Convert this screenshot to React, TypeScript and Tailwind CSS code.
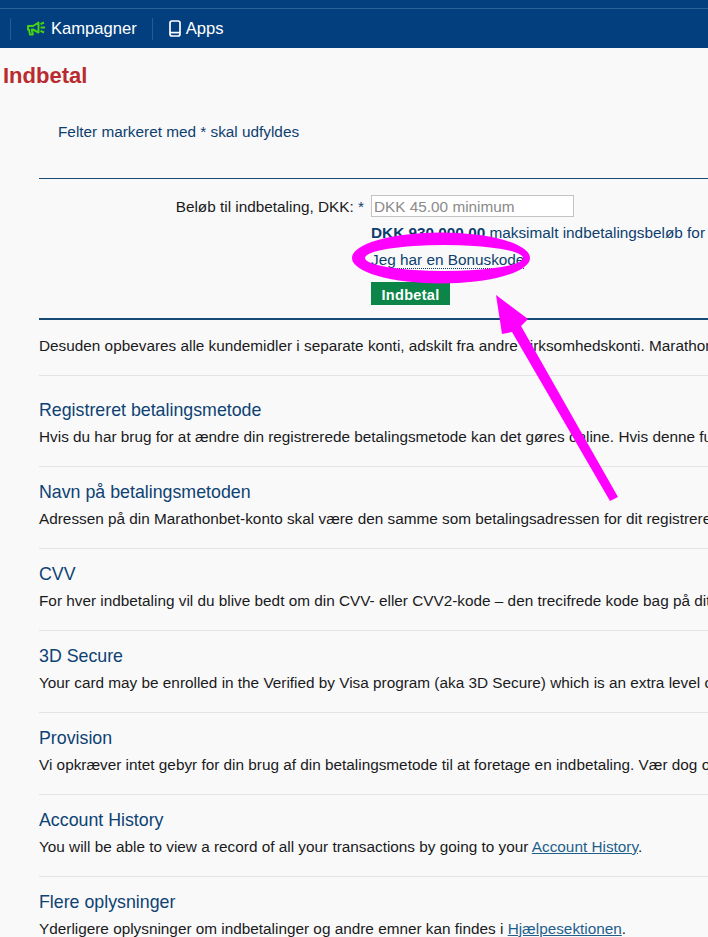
type Section = {
  title: string;
  text: string;
  link?: string;
};

const SECTIONS: Section[] = [
  {
    title: "Registreret betalingsmetode",
    text: "Hvis du har brug for at ændre din registrerede betalingsmetode kan det gøres online. Hvis denne funktion",
  },
  {
    title: "Navn på betalingsmetoden",
    text: "Adressen på din Marathonbet-konto skal være den samme som betalingsadressen for dit registrerede kort",
  },
  {
    title: "CVV",
    text: "For hver indbetaling vil du blive bedt om din CVV- eller CVV2-kode – den trecifrede kode bag på dit kort",
  },
  {
    title: "3D Secure",
    text: "Your card may be enrolled in the Verified by Visa program (aka 3D Secure) which is an extra level of security",
  },
  {
    title: "Provision",
    text: "Vi opkræver intet gebyr for din brug af din betalingsmetode til at foretage en indbetaling. Vær dog opmærksom",
  },
  {
    title: "Account History",
    text: "You will be able to view a record of all your transactions by going to your ",
    link: "Account History",
  },
  {
    title: "Flere oplysninger",
    text: "Yderligere oplysninger om indbetalinger og andre emner kan findes i ",
    link: "Hjælpesektionen",
  },
];

function MegaphoneIcon() {
  return (
    <svg width="19" height="15" viewBox="0 0 19 15" fill="none" stroke="#45d414" strokeWidth="2" aria-hidden>
      <path d="M1 5 H6 L11.5 1.5 V11.5 L6 8.5 H4.8 L5.8 13.6 H3 L2 8.5 H1 Z" strokeLinejoin="round" />
      <path d="M13.5 3.2 L17 1.5 M13.5 6.5 H18 M13.5 9.8 L17 11.5" />
    </svg>
  );
}

function PhoneIcon() {
  return (
    <svg width="12" height="17" viewBox="0 0 12 17" fill="none" stroke="white" strokeWidth="1.7" aria-hidden>
      <rect x="1" y="1" width="10" height="15" rx="2" />
      <path d="M1 12.6 H11" />
    </svg>
  );
}

export default function App() {
  return (
    <div className="relative h-[937px] w-[708px] overflow-hidden bg-[#f9f9fa] font-['Liberation_Sans',Arial,sans-serif] text-[15.33px] text-[#1a1a1a]">
      <header className="h-12 bg-[#033f7e]">
        <div className="h-[9px] border-b border-[#2a6299]" />
        <nav className="flex h-[39px] items-center pl-2.5 pt-px text-[16.6px] text-white">
          <span className="h-[22px] w-px bg-[#255c93]" />
          <a className="ml-4 flex items-center gap-[5px]">
            <MegaphoneIcon />
            <span>Kampagner</span>
          </a>
          <span className="ml-[15px] h-[22px] w-px bg-[#255c93]" />
          <a className="ml-4 flex items-center gap-[5px]">
            <PhoneIcon />
            <span>Apps</span>
          </a>
        </nav>
      </header>

      <main>
        <h1 className="ml-[3px] mt-[14px] text-[22px] font-bold leading-[28px] text-[#b92b2f]">Indbetal</h1>
        <p className="ml-[58px] mt-[32px] leading-[20px] text-[#0d3f6e]">Felter markeret med * skal udfyldes</p>

        <div className="ml-[39px] mt-[36px] border-t border-b-2 border-[#174a75] pb-[13px] pt-4">
          <div className="flex">
            <label className="w-[332px] pr-[7px] pt-[2px] text-right leading-[20px]">
              Beløb til indbetaling, DKK: <span className="text-[#0d3f6e]">*</span>
            </label>
            <div className="min-w-0 flex-1 whitespace-nowrap">
              <input
                readOnly
                placeholder="DKK 45.00 minimum"
                className="block h-[22px] w-[203px] border border-[#c4c4c4] bg-white px-[2px] pt-[2px] text-[15.33px] text-[#555555] outline-none placeholder:text-[#8a8a8a]"
              />
              <p className="mt-[6px] leading-[20px] text-[#0d3f6e]">
                <b>DKK 930.000,00</b> maksimalt indbetalingsbeløb for
              </p>
              <p className="mt-[7px] leading-[20px]">
                <a className="border-b border-dotted border-[#0d3f6e] text-[#0d3f6e]">Jeg har en Bonuskode</a>
              </p>
              <button
                type="button"
                className="mt-[12px] block h-[23px] w-[79px] bg-[#0b8548] pt-[2px] text-[14.5px] font-bold leading-[23px] tracking-[0.3px] text-white"
              >
                Indbetal
              </button>
            </div>
          </div>
        </div>

        <p className="ml-[39px] mt-[16px] whitespace-nowrap leading-[20px]">
          Desuden opbevares alle kundemidler i separate konti, adskilt fra andre virksomhedskonti. Marathonbet
        </p>

        <div className="ml-[39px] mt-[19px]">
          {SECTIONS.map((section) => (
            <section
              key={section.title}
              className="h-[82px] whitespace-nowrap border-t border-[#e4e4e4] pt-[14px] first:h-[91px] first:pt-[23px]"
            >
              <h2 className="text-[17.8px] leading-[22px] text-[#0d4273]">{section.title}</h2>
              <p className="mt-[6px] leading-[20px]">
                {section.text}
                {section.link && (
                  <>
                    <a className="text-[#1e5f8c] underline">{section.link}</a>.
                  </>
                )}
              </p>
            </section>
          ))}
        </div>
      </main>

      {/* hand drawn markup on top of the screenshot */}
      <svg className="pointer-events-none absolute inset-0" width="708" height="937" viewBox="0 0 708 937" aria-hidden>
        <path
          fillRule="evenodd"
          fill="#ff00ff"
          d="M352 258 a89 25.5 0 1 0 178 0 a89 25.5 0 1 0 -178 0 Z M365 258 a79 13 0 1 0 158 0 a79 13 0 1 0 -158 0 Z"
        />
        <path d="M496 295 L528 319 L521 326 L618 497 L610 501 L512 332 L502 334 Z" fill="#ff00ff" />
      </svg>
    </div>
  );
}
